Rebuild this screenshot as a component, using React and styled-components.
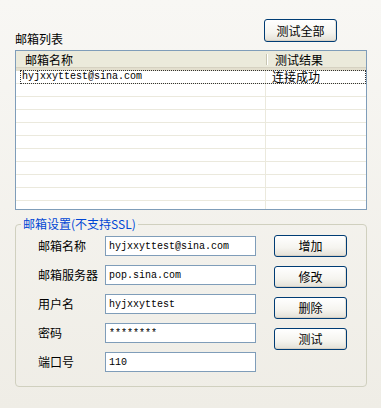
import React from 'react';
import styled, { createGlobalStyle } from 'styled-components';

const GlobalStyle = createGlobalStyle`
  html, body {
    margin: 0;
    padding: 0;
  }
  body {
    font-family: "Noto Sans CJK SC", "Liberation Sans", sans-serif;
    font-size: 12px;
    color: #000;
  }
`

const Window = styled.div`
  width: 381px;
  height: 408px;
  box-sizing: border-box;
  background: linear-gradient(to bottom, #f8f7f4, #efede6);
  overflow: hidden;
`

const TopBar = styled.div`
  display: flex;
  justify-content: space-between;
  align-items: flex-start;
  height: 50px;
  box-sizing: border-box;
  padding: 19px 44px 0 15px;
`

const SectionLabel = styled.div`
  line-height: 14px;
  align-self: flex-end;
  margin-bottom: 4px;
`

const XpButton = styled.button`
  width: 73px;
  height: ${p => p.$tall ? 22 : 23}px;
  margin-bottom: ${p => p.$tall ? 9 : 0}px;
  padding: 0;
  border: 1px solid #003c74;
  border-radius: 3px;
  background: linear-gradient(to bottom, #ffffff 0%, #f5f4ef 60%, #e3e0d6 100%);
  box-shadow: inset 0 -1px 0 #d6d0c5, inset -1px 0 0 #e6e2d8;
  font-family: "Noto Sans CJK SC", sans-serif;
  font-size: 12px;
  line-height: 14px;
  color: #000;
`

const ListBox = styled.div`
  margin: 0 14px 0 15px;
  height: 160px;
  box-sizing: border-box;
  border: 1px solid #7f9db9;
  background: #fff;
  overflow: hidden;
`

const ListHeader = styled.div`
  display: grid;
  grid-template-columns: 250px 1fr;
  height: 20px;
  box-sizing: border-box;
  background: #ebeadb;
  border-bottom: 3px solid #e2decd;
  box-shadow: inset 0 -1px 0 #d6d2c2;
`

const HeaderCell = styled.div`
  position: relative;
  padding-left: 9px;
  line-height: 17px;
  font-size: 12px;
  &:not(:first-child)::before {
    content: "";
    position: absolute;
    left: 0;
    top: 3px;
    bottom: 3px;
    width: 1px;
    background: #c7c5b2;
    box-shadow: 1px 0 0 #fff;
  }
`

const Row = styled.div`
  display: grid;
  grid-template-columns: 250px 1fr;
  height: 13px;
  box-sizing: border-box;
  border-bottom: 1px solid #ebe9dd;
  position: relative;
  ${p => p.$focused && `
    &::after {
      content: "";
      position: absolute;
      left: 4px;
      right: 0;
      top: -1px;
      bottom: -1px;
      border: 1px dotted #333;
    }
  `}
`

const Cell = styled.div`
  line-height: 12px;
  height: 12px;
  padding-left: 6px;
  border-right: ${p => p.$first ? '1px solid #ebe9dd' : 'none'};
  font-family: ${p => p.$mono ? '"Liberation Mono", monospace' : '"Noto Sans CJK SC", sans-serif'};
  font-size: ${p => p.$mono ? 10 : 12}px;
  white-space: nowrap;
`

const Group = styled.fieldset`
  margin: 7px 14px 0 15px;
  padding: 4px 19px 14px 22px;
  min-width: 0;
  border: 1px solid #d0d0bf;
  border-radius: 4px;
  display: flex;
  gap: 18px;
`

const Legend = styled.legend`
  margin-left: -17px;
  padding: 0 2px;
  color: #0046d5;
  font-size: 12px;
  line-height: 14px;
`

const Form = styled.div`
  display: flex;
  flex-direction: column;
  gap: 9px;
  padding-top: 1px;
`

const FieldRow = styled.label`
  display: grid;
  grid-template-columns: 67px 151px;
  align-items: center;
  height: 20px;
`

const FieldLabel = styled.span`
  font-size: 12px;
  line-height: 14px;
`

const TextInput = styled.input`
  width: 151px;
  height: 20px;
  box-sizing: border-box;
  border: 1px solid #7f9db9;
  padding: 0 3px;
  background: #fff;
  font-family: "Liberation Mono", monospace;
  font-size: 10px;
  color: #000;
  outline: none;
`

const Actions = styled.div`
  display: flex;
  flex-direction: column;
`

const fields = [
  { label: '邮箱名称', value: 'hyjxxyttest@sina.com' },
  { label: '邮箱服务器', value: 'pop.sina.com' },
  { label: '用户名', value: 'hyjxxyttest' },
  { label: '密码', value: '********' },
  { label: '端口号', value: '110' },
]

const rows = [
  { name: 'hyjxxyttest@sina.com', result: '连接成功' },
  ...Array.from({ length: 10 }, () => ({ name: '', result: '' })),
]

export default function App() {
  return (
    <>
      <GlobalStyle />
      <Window>
        <TopBar>
          <SectionLabel>邮箱列表</SectionLabel>
          <XpButton>测试全部</XpButton>
        </TopBar>
        <ListBox>
          <ListHeader>
            <HeaderCell>邮箱名称</HeaderCell>
            <HeaderCell>测试结果</HeaderCell>
          </ListHeader>
          {rows.map((r, i) => (
            <Row key={i} $focused={i === 0}>
              <Cell $first $mono>{r.name}</Cell>
              <Cell>{r.result}</Cell>
            </Row>
          ))}
        </ListBox>
        <Group>
          <Legend>邮箱设置(不支持SSL)</Legend>
          <Form>
            {fields.map(f => (
              <FieldRow key={f.label}>
                <FieldLabel>{f.label}</FieldLabel>
                <TextInput defaultValue={f.value} />
              </FieldRow>
            ))}
          </Form>
          <Actions>
            <XpButton $tall>增加</XpButton>
            <XpButton $tall>修改</XpButton>
            <XpButton $tall>删除</XpButton>
            <XpButton $tall>测试</XpButton>
          </Actions>
        </Group>
      </Window>
    </>
  )
}
